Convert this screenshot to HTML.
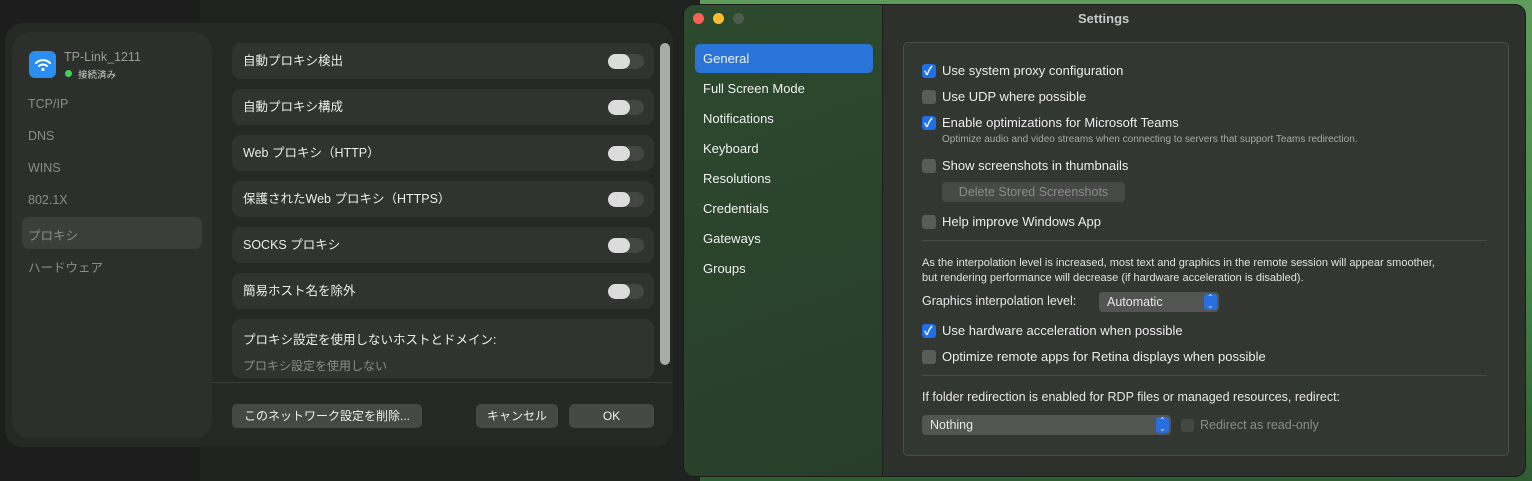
<!DOCTYPE html>
<html><head><meta charset="utf-8"><style>
*{margin:0;padding:0;box-sizing:border-box}
body{width:1532px;height:481px;overflow:hidden;position:relative;background:#202220;font-family:"Liberation Sans","Noto Sans CJK JP",sans-serif;font-size:13px;color:#e6e6e6}
.a{position:absolute}
.row{position:absolute;left:232px;width:422px;height:36px;background:#313331;border-radius:9px;padding-left:11px;line-height:36px;font-size:12.5px;color:#ececec}
.tg{position:absolute;right:10px;top:11px;width:36px;height:15px;border-radius:8px;background:#444644}
.tg:after{content:"";position:absolute;left:0;top:0;width:22px;height:15px;border-radius:8px;background:#dcdcdc}
.side{position:absolute;left:28px;color:#8a8c8a;font-size:12.5px}
.btn{position:absolute;top:404px;height:24px;background:#464846;border-radius:5px;text-align:center;line-height:24px;font-size:12px;color:#eee}
.nav{position:absolute;left:703px;font-size:13px;color:#f0f0f0}
.cb{position:absolute;left:922px;width:14px;height:14px;border-radius:3px;background:#5a5c5a}
.cb.on{background:#1f6fe6}
.cb.on:after{content:"✓";position:absolute;left:2px;top:-2px;font-size:12px;color:#fff;font-weight:bold}
.lbl{position:absolute;left:942px;font-size:13px;color:#ececec}
</style></head><body>
<div class="a" style="left:0;top:0;width:200px;height:481px;background:#1c1d1c"></div>
<div class="a" style="left:5px;top:23px;width:668px;height:424px;background:#262826;border-radius:18px"></div>
<div class="a" style="left:12px;top:32px;width:200px;height:406px;background:#2d2f2d;border-radius:18px"></div>
<div class="a" style="left:29px;top:51px;width:27px;height:27px;border-radius:6px;background:#2a8ef0;color:#fff;text-align:center;line-height:27px;font-size:16px">
<svg width="18" height="16" viewBox="0 0 18 16" style="margin-top:6px"><path d="M2 6a10 10 0 0 1 14 0M5 9a6 6 0 0 1 8 0" stroke="#fff" stroke-width="2" fill="none" stroke-linecap="round"/><circle cx="9" cy="12.5" r="1.6" fill="#fff"/></svg></div>
<div class="a" style="left:64px;top:50px;font-size:12.5px;color:#9a9c9a">TP-Link_1211</div>
<div class="a" style="left:65px;top:70px;width:7px;height:7px;border-radius:50%;background:#3ed35a"></div>
<div class="a" style="left:78px;top:67px;font-size:9.5px;color:#cfcfcf">接続済み</div>
<div class="side" style="top:97px">TCP/IP</div>
<div class="side" style="top:129px">DNS</div>
<div class="side" style="top:161px">WINS</div>
<div class="side" style="top:193px">802.1X</div>
<div class="a" style="left:22px;top:217px;width:180px;height:32px;background:#3c3e3c;border-radius:7px"></div>
<div class="side" style="top:225px">プロキシ</div>
<div class="side" style="top:257px">ハードウェア</div>
<div class="row" style="top:43px">自動プロキシ検出<div class="tg"></div></div>
<div class="row" style="top:89px">自動プロキシ構成<div class="tg"></div></div>
<div class="row" style="top:135px">Web プロキシ（HTTP）<div class="tg"></div></div>
<div class="row" style="top:181px">保護されたWeb プロキシ（HTTPS）<div class="tg"></div></div>
<div class="row" style="top:227px">SOCKS プロキシ<div class="tg"></div></div>
<div class="row" style="top:273px">簡易ホスト名を除外<div class="tg"></div></div>
<div class="row" style="top:319px;height:59px;line-height:normal;padding-top:10px">プロキシ設定を使用しないホストとドメイン:<div style="color:#8a8c8a;margin-top:9px;font-size:12px">プロキシ設定を使用しない</div></div>
<div class="a" style="left:660px;top:43px;width:10px;height:322px;background:#a9aaa9;border-radius:5px"></div>
<div class="a" style="left:212px;top:382px;width:460px;height:1px;background:#3a3c3a"></div>
<div class="btn" style="left:232px;width:190px">このネットワーク設定を削除...</div>
<div class="btn" style="left:476px;width:82px">キャンセル</div>
<div class="btn" style="left:569px;width:85px">OK</div>

<div class="a" style="left:700px;top:0;width:832px;height:481px;background:linear-gradient(180deg,#5f9c5c 0%,#4a8a4c 50%,#2f5d33 100%)"></div>
<div class="a" style="left:684px;top:5px;width:841px;height:471px;background:#2d302b;border-radius:10px;overflow:hidden;box-shadow:0 0 0 1px #1a1c1a">
<div class="a" style="left:0;top:0;width:199px;height:471px;background:linear-gradient(160deg,#2c4a2e,#2a432c 60%,#283e2a);border-right:1px solid #1d1f1d"></div>
</div>
<div class="a" style="left:693px;top:13px;width:11px;height:11px;border-radius:50%;background:#fe5f57"></div>
<div class="a" style="left:713px;top:13px;width:11px;height:11px;border-radius:50%;background:#febc2e"></div>
<div class="a" style="left:733px;top:13px;width:11px;height:11px;border-radius:50%;background:#4e5a4e"></div>
<div class="a" style="left:1078px;top:11px;font-size:13px;font-weight:bold;color:#c8c8c8">Settings</div>
<div class="a" style="left:695px;top:44px;width:178px;height:29px;background:#2a73d8;border-radius:5px"></div>
<div class="nav" style="top:51px">General</div>
<div class="nav" style="top:81px">Full Screen Mode</div>
<div class="nav" style="top:111px">Notifications</div>
<div class="nav" style="top:141px">Keyboard</div>
<div class="nav" style="top:171px">Resolutions</div>
<div class="nav" style="top:201px">Credentials</div>
<div class="nav" style="top:231px">Gateways</div>
<div class="nav" style="top:261px">Groups</div>
<div class="a" style="left:903px;top:42px;width:606px;height:414px;border:1px solid #4a4d48;border-radius:5px;background:#333732"></div>
<div class="cb on" style="top:64px"></div><div class="lbl" style="top:63px">Use system proxy configuration</div>
<div class="cb" style="top:90px"></div><div class="lbl" style="top:89px">Use UDP where possible</div>
<div class="cb on" style="top:116px"></div><div class="lbl" style="top:115px">Enable optimizations for Microsoft Teams</div>
<div class="a" style="left:942px;top:134px;font-size:10px;color:#a8a8a8">Optimize audio and video streams when connecting to servers that support Teams redirection.</div>
<div class="cb" style="top:159px"></div><div class="lbl" style="top:158px">Show screenshots in thumbnails</div>
<div class="a" style="left:942px;top:182px;width:183px;height:20px;background:#474947;border-radius:4px;color:#8a8c8a;font-size:12.5px;text-align:center;line-height:20px">Delete Stored Screenshots</div>
<div class="cb" style="top:215px"></div><div class="lbl" style="top:214px">Help improve Windows App</div>
<div class="a" style="left:922px;top:240px;width:565px;height:1px;background:#4a4c4a"></div>
<div class="a" style="left:922px;top:256px;font-size:11px;line-height:15px;color:#e0e0e0">As the interpolation level is increased, most text and graphics in the remote session will appear smoother,<br>but rendering performance will decrease (if hardware acceleration is disabled).</div>
<div class="a" style="left:922px;top:294px;font-size:12.5px">Graphics interpolation level:</div>
<div class="a" style="left:1099px;top:292px;width:120px;height:20px;background:#535553;border-radius:4px;font-size:12.5px;line-height:20px;padding-left:8px">Automatic<div class="a" style="right:2px;top:2px;width:13px;height:16px;background:#2a6fe0;border-radius:3px;font-size:8px;text-align:center;line-height:8px">⌃<br>⌄</div></div>
<div class="cb on" style="top:324px"></div><div class="lbl" style="top:323px">Use hardware acceleration when possible</div>
<div class="cb" style="top:350px"></div><div class="lbl" style="top:349px">Optimize remote apps for Retina displays when possible</div>
<div class="a" style="left:922px;top:375px;width:565px;height:1px;background:#4a4c4a"></div>
<div class="a" style="left:922px;top:390px;font-size:12.5px">If folder redirection is enabled for RDP files or managed resources, redirect:</div>
<div class="a" style="left:922px;top:415px;width:249px;height:20px;background:#535553;border-radius:4px;font-size:12.5px;line-height:20px;padding-left:8px">Nothing<div class="a" style="right:2px;top:2px;width:13px;height:16px;background:#2a6fe0;border-radius:3px;font-size:8px;text-align:center;line-height:8px">⌃<br>⌄</div></div>
<div class="a" style="left:1181px;top:419px;width:13px;height:13px;border-radius:3px;background:#454745"></div>
<div class="a" style="left:1200px;top:418px;font-size:12.5px;color:#8a8c8a">Redirect as read-only</div>
</body></html>
